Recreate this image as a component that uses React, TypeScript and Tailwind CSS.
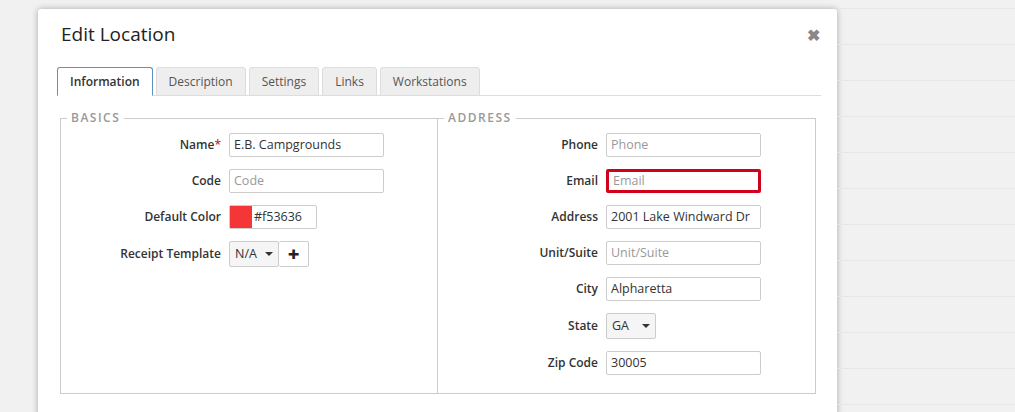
import React from 'react'

const font = { fontFamily: '"Open Sans", "Liberation Sans", sans-serif' }

function Label({ children, req }: { children: React.ReactNode; req?: boolean }) {
  return (
    <span className="text-right text-[12px] font-semibold text-[#333]">
      {children}
      {req && <span className="text-[#c9302c]">*</span>}
    </span>
  )
}

function Input({ value, ph, w = 'w-[155px]', red }: { value?: string; ph?: string; w?: string; red?: boolean }) {
  return (
    <div
      className={`flex h-[24px] items-center rounded-[2px] bg-white px-[4px] text-[12.5px] ${w} ${
        red ? 'border-[3px] border-[#d0021b] px-[2px]' : 'border border-[#ccc]'
      } ${value ? 'text-[#333]' : 'text-[#999]'}`}
    >
      {value ?? ph}
    </div>
  )
}

function Select({ value, w }: { value: string; w: string }) {
  return (
    <div className={`flex h-[26px] items-center justify-between rounded-[2px] border border-[#ccc] bg-[#f5f5f5] px-[5px] text-[12.5px] text-[#333] ${w}`}>
      {value}
      <span className="h-0 w-0 border-x-[4px] border-t-[4px] border-x-transparent border-t-[#333]" />
    </div>
  )
}

function Fieldset({ title, children, className }: { title: string; children: React.ReactNode; className: string }) {
  return (
    <fieldset className={`border border-[#ccc] ${className}`}>
      <legend className="ml-[6px] px-[4px] text-[12px] font-semibold tracking-[1.5px] text-[#999]">{title}</legend>
      {children}
    </fieldset>
  )
}

export default function App() {
  const tabs = ['Information', 'Description', 'Settings', 'Links', 'Workstations']
  return (
    <div className="flex h-[412px] w-[1015px] overflow-hidden bg-[#f1f1f1]" style={font}>
      <div className="w-[38px] shrink-0" />
      <div className="mt-[9px] flex h-[420px] w-[799px] shrink-0 flex-col rounded-[3px] bg-white px-[19px] shadow-[0_0_6px_rgba(0,0,0,0.3)]">
        <div className="flex h-[50px] items-center justify-between pl-[4px] pt-[1px]">
          <h1 className="text-[19px] font-medium text-[#222]">Edit Location</h1>
          <span className="mr-[-2px] text-[16px] font-bold text-[#888]">✖</span>
        </div>
        <div className="mt-[8px] mr-[-3px] flex gap-[3px] border-b border-[#ddd]">
          {tabs.map((t, i) => (
            <div
              key={t}
              className={`mb-[-1px] flex h-[29px] items-center rounded-t-[3px] border px-[12px] text-[12px] ${
                i === 0
                  ? 'border-[#5a8fc7] border-b-white bg-white font-semibold text-[#333]'
                  : 'border-[#ddd] bg-[#eee] text-[#555]'
              }`}
            >
              {t}
            </div>
          ))}
        </div>
        <div className="mt-[13px] ml-[3px] flex h-[285px] w-[756px]">
          <Fieldset title="BASICS" className="w-[378px]">
            <div className="mt-[6px] grid grid-cols-[160px_auto] items-center gap-x-[8px] gap-y-[12px]">
              <Label req>Name</Label>
              <Input value="E.B. Campgrounds" />
              <Label>Code</Label>
              <Input ph="Code" />
              <Label>Default Color</Label>
              <div className="flex h-[24px] w-[88px] rounded-[2px] border border-[#ccc] text-[12.5px] text-[#333]">
                <div className="w-[22px] bg-[#f53636]" />
                <span className="self-center pl-[2px]">#f53636</span>
              </div>
              <Label>Receipt Template</Label>
              <div className="flex">
                <Select value="N/A" w="w-[50px]" />
                <div className="flex h-[26px] w-[30px] items-center justify-center rounded-[2px] border border-l-0 border-[#ccc] bg-white text-[20px] font-black leading-none text-[#222]">
                  +
                </div>
              </div>
            </div>
          </Fieldset>
          <Fieldset title="ADDRESS" className="ml-[-1px] w-[379px]">
            <div className="mt-[6px] grid grid-cols-[160px_auto] items-center gap-x-[8px] gap-y-[12px]">
              <Label>Phone</Label>
              <Input ph="Phone" />
              <Label>Email</Label>
              <Input ph="Email" red />
              <Label>Address</Label>
              <Input value="2001 Lake Windward Dr" />
              <Label>Unit/Suite</Label>
              <Input ph="Unit/Suite" />
              <Label>City</Label>
              <Input value="Alpharetta" />
              <Label>State</Label>
              <Select value="GA" w="w-[50px]" />
              <Label>Zip Code</Label>
              <Input value="30005" />
            </div>
          </Fieldset>
        </div>
      </div>
      <div className="flex flex-1 flex-col pt-[8px]">
        {Array.from({ length: 12 }).map((_, i) => (
          <div key={i} className="h-[36px] shrink-0 border-t border-[#e6e6e6]" />
        ))}
      </div>
    </div>
  )
}
